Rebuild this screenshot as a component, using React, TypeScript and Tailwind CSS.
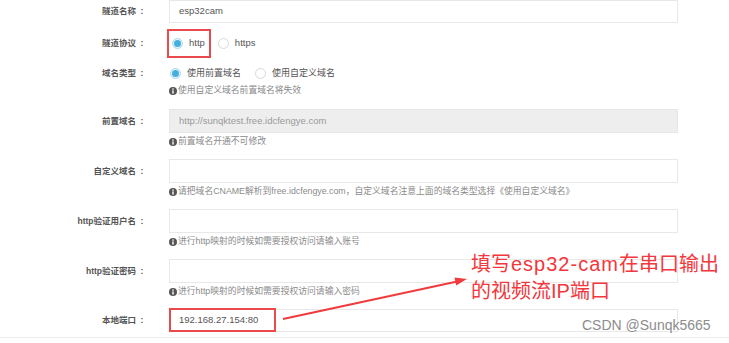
import type { ReactNode } from "react";

function InfoIcon() {
  return (
    <svg width="8" height="8" viewBox="0 0 16 16" className="shrink-0 mr-[1px]">
      <circle cx="8" cy="8" r="8" fill="#555" />
      <circle cx="8" cy="4.2" r="1.6" fill="#fff" />
      <rect x="6.6" y="6.8" width="2.8" height="6.4" fill="#fff" />
    </svg>
  );
}

function Radio({ checked }: { checked?: boolean }) {
  return checked ? (
    <span className="w-[11px] h-[11px] rounded-full border border-[#a9d8ee] bg-[#e6f4fb] flex items-center justify-center shrink-0">
      <span className="w-[7px] h-[7px] rounded-full bg-[#45b0e0]" />
    </span>
  ) : (
    <span className="w-[11px] h-[11px] rounded-full border border-[#d9d9d9] bg-white shrink-0" />
  );
}

function Label({ text, h }: { text: string; h: string }) {
  return (
    <div
      className={`w-[148px] shrink-0 flex items-center justify-end text-[8.5px] font-bold text-[#555] ${h}`}
    >
      <span>{text}</span>
      <span className="inline-block w-[12px] text-center">:</span>
    </div>
  );
}

function Input({ value, disabled, h = "h-[24px]" }: { value?: string; disabled?: boolean; h?: string }) {
  return (
    <div
      className={`${h} w-[509px] border flex items-center px-[9px] text-[9.5px] ${
        disabled ? "bg-[#eeeeee] border-[#e6e6e6] text-[#999]" : "bg-white border-[#e8e8e8] text-[#555]"
      }`}
    >
      {value}
    </div>
  );
}

function Help({ children }: { children: ReactNode }) {
  return (
    <div className="h-[18px] flex items-center text-[8.8px] text-[#8a8a8a] whitespace-nowrap">
      <InfoIcon />
      {children}
    </div>
  );
}

function Row({ label, lh, className = "", children }: { label: string; lh: string; className?: string; children: ReactNode }) {
  return (
    <div className={`flex items-start ${className}`}>
      <Label text={label} h={lh} />
      <div className="ml-[21px]">{children}</div>
    </div>
  );
}

export default function App() {
  return (
    <div className="relative w-[729px] h-[343px] bg-white overflow-hidden font-['Liberation_Sans','Noto_Sans_CJK_SC',sans-serif]">
      <div className="flex flex-col">
        <Row label="隧道名称" lh="h-[23px]">
          <Input value="esp32cam" h="h-[23px]" />
        </Row>

        <Row label="隧道协议" lh="h-[29px]" className="mt-[6px]">
          <div className="flex items-center h-[29px] text-[9.5px] text-[#555]">
            <div className="flex items-center gap-[6px] h-[29px] -ml-[2px] pl-[3px] pr-[4px] border-2 border-[#e94a4c]">
              <Radio checked />
              <span>http</span>
            </div>
            <div className="flex items-center gap-[6px] ml-[7px]">
              <Radio />
              <span>https</span>
            </div>
          </div>
        </Row>

        <Row label="域名类型" lh="h-[17px]" className="mt-[7px]">
          <div className="flex items-center h-[17px] text-[9px] text-[#555]">
            <div className="flex items-center gap-[6px] ml-[1px]">
              <Radio checked />
              <span>使用前置域名</span>
            </div>
            <div className="flex items-center gap-[6px] ml-[14px]">
              <Radio />
              <span>使用自定义域名</span>
            </div>
          </div>
          <Help>使用自定义域名前置域名将失效</Help>
        </Row>

        <Row label="前置域名" lh="h-[24px]" className="mt-[9px]">
          <Input value="http://sunqktest.free.idcfengye.com" disabled />
          <Help>前置域名开通不可修改</Help>
        </Row>

        <Row label="自定义域名" lh="h-[24px]" className="mt-[8px]">
          <Input />
          <Help>请把域名CNAME解析到free.idcfengye.com，自定义域名注意上面的域名类型选择《使用自定义域名》</Help>
        </Row>

        <Row label="http验证用户名" lh="h-[24px]" className="mt-[8px]">
          <Input />
          <Help>进行http映射的时候如需要授权访问请输入账号</Help>
        </Row>

        <Row label="http验证密码" lh="h-[24px]" className="mt-[8px]">
          <Input />
          <Help>进行http映射的时候如需要授权访问请输入密码</Help>
        </Row>

        <Row label="本地端口" lh="h-[23px]" className="mt-[8px]">
          <div className="relative">
            <Input value="192.168.27.154:80" h="h-[23px]" />
            <div className="absolute left-0 top-[-1px] w-[107px] h-[24px] border-2 border-[#e94a4c]" />
          </div>
        </Row>

        <div className="mt-[5px] border-t border-[#ececec]" />
      </div>

      <svg className="absolute inset-0 pointer-events-none" width="729" height="343">
        <line x1="283" y1="319" x2="456" y2="281.8" stroke="#f03a3e" strokeWidth="2" />
        <polygon points="467,279 456.1,285.4 454.5,277.6" fill="#f03a3e" />
      </svg>

      <div className="absolute left-[471px] top-[250px] text-[20px] leading-[26px] text-[#f2373d] font-['Noto_Sans_CJK_SC',sans-serif] whitespace-nowrap">
        <div>
          填写<span className="font-['Liberation_Sans',sans-serif] tracking-[1px]">esp32-cam</span>在串口输出
        </div>
        <div>
          的视频流<span className="font-['Liberation_Sans',sans-serif]">IP</span>端口
        </div>
      </div>

      <div className="absolute left-[582px] top-[316px] text-[14px] leading-[18px] text-[#8c8c8c] font-['Liberation_Sans',sans-serif] [text-shadow:0_0_2px_#fff] whitespace-nowrap">
        CSDN @Sunqk5665
      </div>
    </div>
  );
}
